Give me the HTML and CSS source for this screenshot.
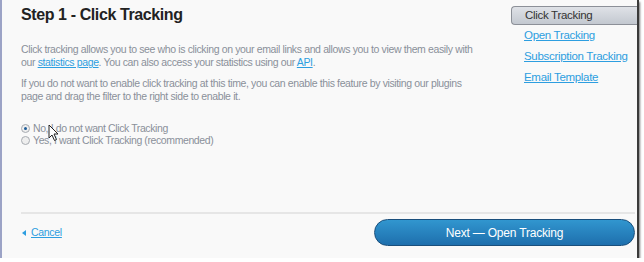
FILE: index.html
```html
<!DOCTYPE html>
<html lang="en">
<head>
    <meta charset="UTF-8">
    <title>Step 1 - Click Tracking</title>
    <link rel="stylesheet" href="styles.css">
</head>
<body>
    <div class="frame">
        <div class="top">
            <div class="main">
                <h2>Step 1 - Click Tracking</h2>
                <p>Click tracking allows you to see who is clicking on your email links and allows you to view them easily with<br>
                    our <a href="#">statistics page</a>. You can also access your statistics using our <a href="#">API</a>.</p>
                <p>If you do not want to enable click tracking at this time, you can enable this feature by visiting our plugins<br>
                    page and drag the filter to the right side to enable it.</p>
                <div class="options">
                    <label class="option"><span class="radio checked"></span>No, I do not want Click Tracking</label>
                    <label class="option"><span class="radio"></span>Yes, I want Click Tracking (recommended)</label>
                    <svg class="cursor" width="12" height="18" viewBox="0 0 12 18">
                        <path d="M1 1 L1 14 L4 11 L6.5 16.5 L8.5 15.5 L6 10 L10 10 Z" fill="#fff" stroke="#222" stroke-width="1"/>
                    </svg>
                </div>
            </div>
            <ul class="steps">
                <li class="current">Click Tracking</li>
                <li><a href="#">Open Tracking</a></li>
                <li><a href="#">Subscription Tracking</a></li>
                <li><a href="#">Email Template</a></li>
            </ul>
        </div>
        <div class="footer">
            <a href="#" class="cancel">Cancel</a>
            <button class="next">Next &mdash; Open Tracking</button>
        </div>
    </div>
</body>
</html>
```

FILE: styles.css
```css
body {
    margin: 0;
    padding: 0;
    background-color: #fff;
    font-family: "Liberation Sans", Arial, sans-serif;
}
.frame {
    width: 616px;
    height: 258px;
    padding: 0 0 0 19px;
    background-color: #f9f9f9;
    border-left: 2px solid #9ca3c6;
    border-right: 2px solid #3a3a3a;
    box-shadow: 1px 2px 2px rgba(0, 0, 0, 0.55);
    display: flex;
    flex-direction: column;
}
.top {
    display: flex;
    flex: 1;
}
.main {
    width: 490px;
    flex: none;
}
h2 {
    margin: 5px 0 0;
    font-size: 16px;
    letter-spacing: -0.4px;
    color: #222;
    line-height: 20px;
}
p {
    margin: 18px 0 0;
    font-size: 10.5px;
    letter-spacing: -0.37px;
    line-height: 13px;
    color: #8a9099;
    white-space: nowrap;
}
p + p {
    margin-top: 8px;
}
a {
    color: #2d9ee0;
}
.options {
    margin-top: 19px;
    position: relative;
}
.option {
    display: flex;
    align-items: center;
    font-size: 10.5px;
    letter-spacing: -0.4px;
    line-height: 12px;
    color: #8a9099;
}
.radio {
    width: 7px;
    height: 7px;
    border: 1px solid #a8acb2;
    border-radius: 50%;
    background: #eee;
    margin: 0 3px 0 0;
    position: relative;
}
.radio.checked::after {
    content: "";
    position: absolute;
    left: 2px;
    top: 2px;
    width: 3px;
    height: 3px;
    border-radius: 50%;
    background: #1d5c98;
}
.cursor {
    position: absolute;
    left: 27px;
    top: 2px;
}
.steps {
    list-style: none;
    margin: 6px 0 0;
    padding: 0;
    flex: 1;
    font-size: 11.5px;
    letter-spacing: -0.3px;
    white-space: nowrap;
}
.steps li {
    height: 21px;
    line-height: 15px;
    padding-left: 13px;
}
.steps li.current {
    height: 17px;
    line-height: 17px;
    margin-bottom: 3px;
    color: #333;
    border: 1px solid #8c9098;
    border-right: none;
    border-radius: 4px 0 0 4px;
    background: linear-gradient(#dfe2e7, #c3c8d0);
}
.footer {
    border-top: 2px solid #e6e6e6;
    height: 39px;
    padding-top: 5px;
    display: flex;
    align-items: flex-start;
    justify-content: space-between;
    margin-right: 2px;
}
.cancel {
    font-size: 10.5px;
    letter-spacing: -0.3px;
    padding-left: 10px;
    position: relative;
    margin-top: 7px;
}
.cancel::before {
    content: "";
    position: absolute;
    left: 1px;
    top: 4px;
    border: 3px solid transparent;
    border-right: 4px solid #2d9ee0;
    border-left: none;
}
.next {
    width: 261px;
    height: 27px;
    border: 1px solid #1a4f7c;
    border-radius: 14px;
    background: linear-gradient(#3196cf, #1e6fad);
    color: #fff;
    font-family: "Liberation Sans", Arial, sans-serif;
    font-size: 12px;
    letter-spacing: -0.2px;
    cursor: pointer;
}
```
